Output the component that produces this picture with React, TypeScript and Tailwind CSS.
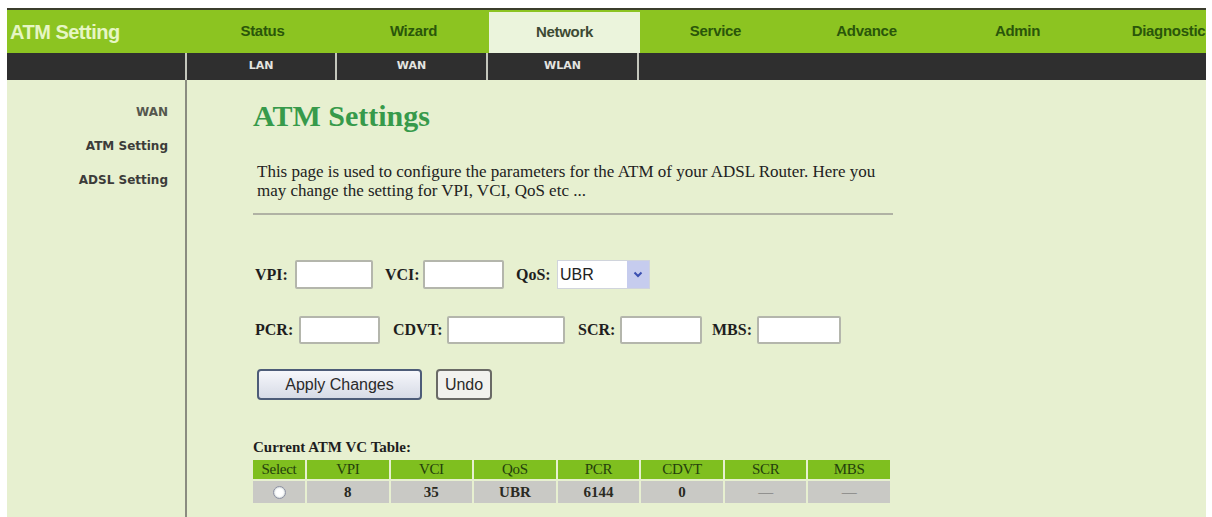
import React from "react";

const serif = "font-['Liberation_Serif','Times_New_Roman',serif]";
const sans = "font-['Liberation_Sans',Arial,sans-serif]";
const verdana = "font-['DejaVu_Sans',Verdana,sans-serif]";

const tabs = ["Status", "Wizard", "Network", "Service", "Advance", "Admin", "Diagnostic"];

function Field({ label, lw, w }: { label: string; lw: string; w: string }) {
  return (
    <div className="flex h-full items-center">
      <span className={"text-[16px] font-bold text-[#1e1e1e] " + lw}>{label}</span>
      <div className={"h-full rounded-[2px] border-2 border-[#b4b6ac] bg-white " + w} />
    </div>
  );
}

export default function App() {
  const cols = ["Select", "VPI", "VCI", "QoS", "PCR", "CDVT", "SCR", "MBS"];
  const row = ["", "8", "35", "UBR", "6144", "0", "—", "—"];
  return (
    <div className="h-[517px] w-[1212px] overflow-hidden bg-white pl-[7px] pr-[6px] pt-[8px]">
      <div className="flex h-full flex-col">
        {/* top menu */}
        <div className="h-[2px] bg-[#3b3d2c]" />
        <div className={"flex h-[43px] flex-none overflow-hidden bg-[#8cc421] " + sans}>
          <div className="flex w-[180px] flex-none items-center pl-[3px] text-[20px] font-bold tracking-[-0.5px] text-[#e6f6c4]">ATM Setting</div>
          {tabs.map((t) => (
            <div
              key={t}
              className={
                "flex w-[151px] flex-none items-center justify-center text-[15px] font-bold tracking-[-0.3px] " +
                (t === "Network" ? "mt-[2px] bg-[#ebf4dc] text-[#3d4a33]" : "text-[#2a560a]")
              }
            >
              {t}
            </div>
          ))}
        </div>
        {/* sub menu */}
        <div className={"flex h-[27px] flex-none bg-[#2f2f2f] text-[11px] font-bold text-[#e4e4e0] " + verdana}>
          <div className="w-[178px] flex-none" />
          <div className="w-[2px] flex-none bg-[#c4c6bc]" />
          <div className="flex w-[148px] flex-none items-center justify-center">LAN</div>
          <div className="w-[2px] flex-none bg-[#c4c6bc]" />
          <div className="flex w-[149px] flex-none items-center justify-center">WAN</div>
          <div className="w-[2px] flex-none bg-[#c4c6bc]" />
          <div className="flex w-[149px] flex-none items-center justify-center">WLAN</div>
          <div className="w-[2px] flex-none bg-[#c4c6bc]" />
          <div className="flex-1" />
        </div>
        {/* body */}
        <div className="flex flex-1 bg-[#e7f0d0]">
          <div className={"flex w-[178px] flex-none flex-col items-end gap-[20px] pr-[17px] pt-[25px] text-[12px] font-bold leading-[14px] text-[#3c3c3a] " + verdana}>
            <div className="text-[#55574e]">WAN</div>
            <div>ATM Setting</div>
            <div>ADSL Setting</div>
          </div>
          <div className="w-[2px] flex-none bg-[#8a8c80]" />
          <div className={"flex-1 pl-[66px] " + serif}>
            <h1 className="mt-[21px] text-[30px] font-bold leading-[30px] text-[#379a4b]">ATM Settings</h1>
            <p className="ml-[4px] mt-[31px] text-[17px] leading-[19px] text-[#222]">
              This page is used to configure the parameters for the ATM of your ADSL Router. Here you
              <br />
              may change the setting for VPI, VCI, QoS etc ...
            </p>
            <div className="mt-[13px] h-[2px] w-[640px] bg-[#b0b2a4]" />

            <div className="ml-[2px] mt-[45px] flex h-[29px] items-center">
              <Field label="VPI:" lw="w-[40px]" w="w-[78px]" />
              <div className="w-[12px]" />
              <Field label="VCI:" lw="w-[38px]" w="w-[81px]" />
              <div className="w-[12px]" />
              <div className="flex h-full items-center">
                <span className="w-[41px] text-[16px] font-bold text-[#1e1e1e]">QoS:</span>
                <div className={"flex h-full w-[93px] items-center border border-[#d0d4dc] bg-white " + sans}>
                  <span className="flex-1 pl-[2px] text-[16px] text-[#222]">UBR</span>
                  <div className="flex h-full w-[22px] items-center justify-center bg-[#c6ccee]">
                    <svg width="10" height="7" viewBox="0 0 10 7">
                      <path d="M1.5 1.5 L5 5 L8.5 1.5" fill="none" stroke="#3a4fb0" strokeWidth="2" />
                    </svg>
                  </div>
                </div>
              </div>
            </div>

            <div className="ml-[2px] mt-[27px] flex h-[28px] items-center">
              <Field label="PCR:" lw="w-[44px]" w="w-[81px]" />
              <div className="w-[13px]" />
              <Field label="CDVT:" lw="w-[54px]" w="w-[118px]" />
              <div className="w-[13px]" />
              <Field label="SCR:" lw="w-[42px]" w="w-[82px]" />
              <div className="w-[10px]" />
              <Field label="MBS:" lw="w-[45px]" w="w-[84px]" />
            </div>

            <div className={"ml-[4px] mt-[25px] flex gap-[14px] " + sans}>
              <button className="h-[31px] w-[165px] rounded-[4px] border-2 border-[#4d5c78] bg-gradient-to-b from-[#f6f7fb] to-[#d7dbe6] text-[16px] text-[#2a2a2a]">Apply Changes</button>
              <button className="h-[31px] w-[56px] rounded-[4px] border-2 border-[#6a6a66] bg-[#f2f2ee] text-[16px] text-[#2a2a2a]">Undo</button>
            </div>

            <div className="mt-[38px] text-[15px] font-bold leading-[18px] text-[#1e1e1e]">Current ATM VC Table:</div>
            <div className="mt-[4px] grid w-[637px] grid-cols-[52px_repeat(7,1fr)] gap-[2px]">
              {cols.map((c) => (
                <div key={c} className="flex h-[19px] items-center justify-center bg-[#7fbf1f] text-[15px] leading-none tracking-[-0.3px] text-[#24400c]">{c}</div>
              ))}
              {row.map((v, i) => (
                <div key={i} className="flex h-[22px] items-center justify-center bg-[#c9c9c5] text-[15px] font-bold text-[#2a2a22]">
                  {i === 0 ? (
                    <span className="h-[13px] w-[13px] rounded-full border border-[#8a8ea0] bg-white shadow-[inset_0_0_2px_#9aa]" />
                  ) : v === "—" ? (
                    <span className="font-normal text-[#666]">—</span>
                  ) : (
                    v
                  )}
                </div>
              ))}
            </div>
          </div>
        </div>
      </div>
    </div>
  );
}
